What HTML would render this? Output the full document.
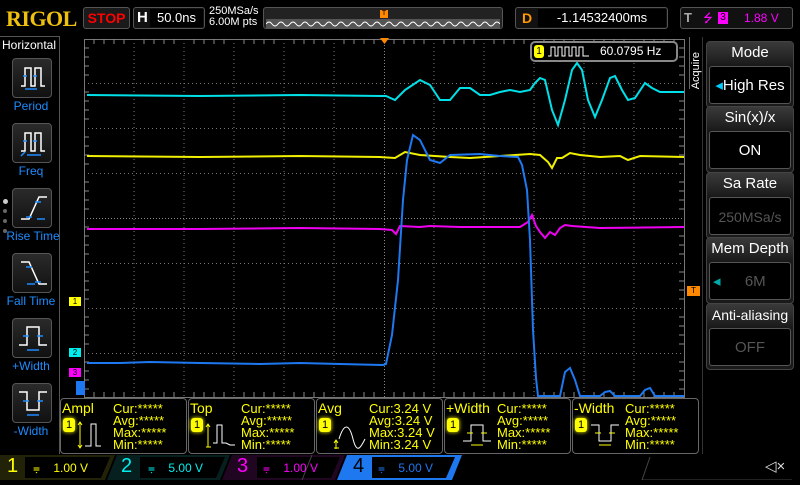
<!DOCTYPE html>
<html><head><meta charset="utf-8"><style>
*{margin:0;padding:0;box-sizing:border-box}
body{width:800px;height:480px;background:#000;position:relative;overflow:hidden;font-family:"Liberation Sans",sans-serif;color:#fff}
.a{position:absolute}
.btn{position:absolute;left:12px;width:40px;height:40px;border:1px solid #555;border-radius:4px;background:linear-gradient(#2a2a2a,#111)}
.bl{position:absolute;left:0;width:62px;text-align:center;color:#1e8cff;font-size:12px}
.rp{position:absolute;left:706px;width:88px;border:1px solid #444;border-radius:4px;background:#1a1a1a}
.rp .t{text-align:center;font-size:15px;color:#fff;height:22px;line-height:22px;background:linear-gradient(#3a3a3a,#1c1c1c)}
.rp .v{margin:2px 2px 3px;height:38px;border:1px solid #555;border-radius:3px;background:#000;text-align:center;line-height:38px;font-size:15px}
.m{position:absolute;top:398px;width:127px;height:56px;border:1px solid #666;border-radius:4px;color:#ff0;font-size:12px;line-height:12px}
.m .n{position:absolute;left:1px;top:3px;font-size:14px}
.m .k{position:absolute;left:52px;top:4px;line-height:12px;font-size:13px}
.m .one{position:absolute;left:2px;top:19px;width:12px;height:14px;background:#ff0;color:#000;border-radius:3px;box-shadow:0 0 4px #ff0;text-align:center;font-size:11px;line-height:14px}
.ch{position:absolute;top:456px;height:24px;font-size:12px}
</style></head><body>
<div class="a" style="left:6px;top:6px;font-family:'Liberation Serif',serif;font-weight:bold;font-size:22px;color:#f0c010;letter-spacing:-0.5px">RIGOL</div>
<div class="a" style="left:83px;top:7px;width:47px;height:22px;border:1px solid #555;border-radius:3px;background:#1a1a1a;color:#f00;font-weight:bold;font-size:14px;text-align:center;line-height:20px">STOP</div>
<div class="a" style="left:133px;top:7px;width:72px;height:22px;border:1px solid #555;border-radius:3px;background:#111"><span class="a" style="left:3px;top:1px;font-weight:bold;font-size:15px">H</span><div class="a" style="left:16px;top:1px;width:53px;height:18px;background:#000;font-size:13px;text-align:center;line-height:18px">50.0ns</div></div>
<div class="a" style="left:209px;top:6px;font-size:11px;line-height:11px">250MSa/s<br>6.00M pts</div>
<div class="a" style="left:263px;top:7px;width:240px;height:22px;border:1px solid #555;border-radius:3px;background:#222">
<svg class="a" style="left:2px;top:11px" width="234" height="9"><rect width="234" height="9" fill="#555"/><path d="M0 5 q3 -4 6 0 t6 0 t6 0 t6 0 t6 0 t6 0 t6 0 t6 0 t6 0 t6 0 t6 0 t6 0 t6 0 t6 0 t6 0 t6 0 t6 0 t6 0 t6 0 t6 0 t6 0 t6 0 t6 0 t6 0 t6 0 t6 0 t6 0 t6 0 t6 0 t6 0 t6 0 t6 0 t6 0 t6 0 t6 0 t6 0 t6 0 t6 0 t6 0" stroke="#fff" fill="none"/></svg>
<div class="a" style="left:116px;top:2px;width:8px;height:8px;background:#f80;color:#000;font-size:7px;text-align:center">T</div></div>
<div class="a" style="left:515px;top:7px;width:153px;height:22px;border:1px solid #555;border-radius:3px;background:#111"><span class="a" style="left:6px;top:2px;font-weight:bold;font-size:14px;color:#f90">D</span><div class="a" style="left:22px;top:1px;width:128px;height:18px;background:#000;font-size:13px;text-align:center;line-height:18px">-1.14532400ms</div></div>
<div class="a" style="left:680px;top:7px;width:113px;height:22px;border:1px solid #555;border-radius:3px;background:#111;font-size:12px;line-height:20px"><span class="a" style="left:3px;font-weight:bold;color:#aaa;font-size:13px">T</span><span class="a" style="left:22px;color:#f0f">⭍</span><span class="a" style="left:37px;top:4px;width:10px;height:12px;background:#f0f;color:#000;font-size:10px;line-height:12px;text-align:center">3</span><span class="a" style="left:63px;color:#f0f">1.88 V</span></div>
<div class="a" style="left:0;top:36px;width:60px;height:418px;border-right:1px solid #555;border-top:1px solid #555"></div>
<div class="a" style="left:2px;top:38px;font-size:12px">Horizontal</div>
<div class="btn" style="top:58px"><svg width="40" height="40"><path d="M8 27h4V9h6v18h4V9h6v18h4" stroke="#fff" fill="none" stroke-width="1.5"/><path d="M10 17h4M20 17h4M12 30h12" stroke="#1e8cff" stroke-width="1.5"/></svg></div>
<div class="bl" style="top:99px">Period</div>
<div class="btn" style="top:123px"><svg width="40" height="40"><path d="M8 27h4V9h6v18h4V9h6v18h4" stroke="#fff" fill="none" stroke-width="1.5"/><path d="M10 17h4M20 17h4M14 31h14M8 32l4-4" stroke="#1e8cff" stroke-width="1.5"/></svg></div>
<div class="bl" style="top:164px">Freq</div>
<div class="btn" style="top:188px"><svg width="40" height="40"><path d="M8 30h8l10-22h8" stroke="#fff" fill="none" stroke-width="1.5"/><path d="M13 28h6M22 13h6M24 30h8" stroke="#1e8cff" stroke-width="1.5"/></svg></div>
<div class="a" style="left:3px;top:199px;width:5px;height:5px;border-radius:3px;background:#ccc"></div>
<div class="a" style="left:3px;top:209px;width:4px;height:4px;border-radius:2px;background:#666"></div>
<div class="a" style="left:3px;top:219px;width:4px;height:4px;border-radius:2px;background:#666"></div>
<div class="a" style="left:3px;top:229px;width:4px;height:4px;border-radius:2px;background:#666"></div>
<div class="bl" style="top:229px;left:2px">Rise Time</div>
<div class="btn" style="top:253px"><svg width="40" height="40"><path d="M8 8h8l10 22h8" stroke="#fff" fill="none" stroke-width="1.5"/><path d="M13 13h6M22 28h6M14 30h8" stroke="#1e8cff" stroke-width="1.5"/></svg></div>
<div class="bl" style="top:294px">Fall Time</div>
<div class="btn" style="top:318px"><svg width="40" height="40"><path d="M6 26h8V8h12v18h8" stroke="#fff" fill="none" stroke-width="1.5"/><path d="M10 17h6M24 17h6M14 31h12" stroke="#1e8cff" stroke-width="1.5"/></svg></div>
<div class="bl" style="top:359px">+Width</div>
<div class="btn" style="top:383px"><svg width="40" height="40"><path d="M6 8h8v18h12V8h8" stroke="#fff" fill="none" stroke-width="1.5"/><path d="M10 17h6M24 17h6M14 31h12" stroke="#1e8cff" stroke-width="1.5"/></svg></div>
<div class="bl" style="top:424px">-Width</div>
<svg class="a" style="left:0;top:0" width="800" height="480">
<g stroke="#777" stroke-width="1" stroke-dasharray="1 3">
<path d="M134 39V397M184 39V397M234 39V397M284 39V397M334 39V397M434 39V397M484 39V397M534 39V397M584 39V397M634 39V397"/>
<path d="M84 83.5H684M84 128.5H684M84 173.5H684M84 263.5H684M84 308.5H684M84 353.5H684"/>
</g>
<path d="M384.5 39V397M84 218.5H684" stroke="#888" stroke-dasharray="1 2"/>
<rect x="84.5" y="39.5" width="600" height="358" fill="none" stroke="#777"/>
<g stroke="#888">
<path d="M84 48h5M84 57h5M84 66h5M84 75h5M84 92h5M84 101h5M84 110h5M84 119h5M84 137h5M84 146h5M84 155h5M84 164h5M84 182h5M84 191h5M84 200h5M84 209h5M84 227h5M84 236h5M84 245h5M84 254h5M84 272h5M84 281h5M84 290h5M84 299h5M84 317h5M84 326h5M84 335h5M84 344h5M84 362h5M84 371h5M84 380h5M84 389h5"/>
<path d="M684 48h-5M684 57h-5M684 66h-5M684 75h-5M684 92h-5M684 101h-5M684 110h-5M684 119h-5M684 137h-5M684 146h-5M684 155h-5M684 164h-5M684 182h-5M684 191h-5M684 200h-5M684 209h-5M684 227h-5M684 236h-5M684 245h-5M684 254h-5M684 272h-5M684 281h-5M684 290h-5M684 299h-5M684 317h-5M684 326h-5M684 335h-5M684 344h-5M684 362h-5M684 371h-5M684 380h-5M684 389h-5"/>
<path d="M94 397v-5M104 397v-5M114 397v-5M124 397v-5M144 397v-5M154 397v-5M164 397v-5M174 397v-5M194 397v-5M204 397v-5M214 397v-5M224 397v-5M244 397v-5M254 397v-5M264 397v-5M274 397v-5M294 397v-5M304 397v-5M314 397v-5M324 397v-5M344 397v-5M354 397v-5M364 397v-5M374 397v-5M394 397v-5M404 397v-5M414 397v-5M424 397v-5M444 397v-5M454 397v-5M464 397v-5M474 397v-5M494 397v-5M504 397v-5M514 397v-5M524 397v-5M544 397v-5M554 397v-5M564 397v-5M574 397v-5M594 397v-5M604 397v-5M614 397v-5M624 397v-5M644 397v-5M654 397v-5M664 397v-5M674 397v-5"/>
<path d="M94 39v5M104 39v5M114 39v5M124 39v5M144 39v5M154 39v5M164 39v5M174 39v5M194 39v5M204 39v5M214 39v5M224 39v5M244 39v5M254 39v5M264 39v5M274 39v5M294 39v5M304 39v5M314 39v5M324 39v5M344 39v5M354 39v5M364 39v5M374 39v5M394 39v5M404 39v5M414 39v5M424 39v5M444 39v5M454 39v5M464 39v5M474 39v5M494 39v5M504 39v5M514 39v5M524 39v5M544 39v5M554 39v5M564 39v5M574 39v5M594 39v5M604 39v5M614 39v5M624 39v5M644 39v5M654 39v5M664 39v5M674 39v5"/>
</g>
<polyline fill="none" stroke="#00e0e8" stroke-width="2" points="87,95 200,96 300,95 380,96 386,96 395,100 405,90 420,80 430,85 440,100 450,100 460,88 470,88 480,95 490,95 500,92 510,90 520,92 530,90 535,83 540,78 545,80 552,110 558,125 565,100 572,70 577,63 582,70 588,100 595,117 602,100 610,78 615,76 622,90 628,100 635,98 645,83 652,88 660,92 684,92"/>
<polyline fill="none" stroke="#f0f000" stroke-width="2" points="87,156 200,157 300,156 380,157 395,158 405,152 420,155 450,157 470,158 500,156 530,154 540,155 548,162 552,168 557,158 562,158 570,153 580,155 600,157 620,156 628,160 640,156 684,157"/>
<polyline fill="none" stroke="#f000f0" stroke-width="2" points="87,229 200,229 300,228 380,229 392,230 396,234 400,226 420,227 430,226 460,227 520,227 528,222 532,215 536,226 540,232 545,238 550,232 555,235 560,228 565,225 572,226 600,228 684,227"/>
<polyline fill="none" stroke="#1e78f0" stroke-width="2" points="87,363 120,363 150,362 200,363 260,364 300,363 340,364 383,365 386,364 392,335 398,280 403,200 407,160 413,135 420,140 430,160 440,163 450,155 480,154 500,156 518,157 522,165 527,190 530,240 533,330 536,378 538,396 560,396 565,372 570,368 575,380 580,396 600,396 605,392 610,391 615,396 640,396 645,390 650,388 655,396 684,396"/>
</svg>
<div class="a" style="left:69px;top:297px;width:12px;height:9px;background:#ff0;color:#000;font-size:8px;line-height:9px;text-align:center">1</div>
<div class="a" style="left:69px;top:348px;width:12px;height:9px;background:#0ee;color:#000;font-size:8px;line-height:9px;text-align:center">2</div>
<div class="a" style="left:69px;top:368px;width:12px;height:9px;background:#f0f;color:#000;font-size:8px;line-height:9px;text-align:center">3</div>
<div class="a" style="left:76px;top:381px;width:9px;height:14px;background:#1e78f0"></div>
<div class="a" style="left:380px;top:38px;width:9px;height:6px;background:#f80;clip-path:polygon(0 0,100% 0,50% 100%)"></div>
<div class="a" style="left:687px;top:286px;width:13px;height:10px;background:#f80;color:#000;font-size:8px;line-height:10px;text-align:center">T</div>
<div class="a" style="left:530px;top:41px;width:148px;height:21px;border:2px solid #888;border-radius:5px;background:#000;font-size:12px;line-height:17px">
<div class="a" style="left:2px;top:2px;width:10px;height:13px;background:#ff0;color:#000;border-radius:3px;font-size:10px;line-height:13px;text-align:center">1</div>
<svg class="a" style="left:16px;top:3px" width="45" height="12"><path d="M0 10h3V1h4v9h3V1h4v9h3V1h4v9h3V1h4v9h3V1h4v9h6" stroke="#fff" fill="none"/></svg>
<span class="a" style="left:68px">60.0795 Hz</span></div>
<div class="a" style="left:689px;top:37px;width:15px;height:52px;border-left:1px solid #666"></div>
<div class="a" style="left:690px;top:52px;font-size:11px;writing-mode:vertical-rl;transform:rotate(180deg)">Acquire</div>
<div class="a" style="left:702px;top:37px;width:1px;height:417px;background:#333"></div>
<div class="rp" style="top:41px"><div class="t">Mode</div><div class="v" style="font-size:15px"><span style="color:#0cf">◂</span>High Res</div></div>
<div class="rp" style="top:106px"><div class="t">Sin(x)/x</div><div class="v">ON</div></div>
<div class="rp" style="top:172px"><div class="t">Sa Rate</div><div class="v" style="color:#555;font-size:14px">250MSa/s</div></div>
<div class="rp" style="top:237px"><div class="t">Mem Depth</div><div class="v" style="color:#555"><span style="color:#0aa;float:left;margin-left:3px">◂</span>6M</div></div>
<div class="rp" style="top:303px"><div class="t" style="font-size:14px">Anti-aliasing</div><div class="v" style="color:#555">OFF</div></div>
<div class="m" style="left:60px"><span class="n">Ampl</span><div class="one">1</div><div class="k">Cur:*****<br>Avg:*****<br>Max:*****<br>Min:*****</div><svg class="a" style="left:16px;top:22px" width="32" height="28"><path d="M3 2v24M1 4l2-3 2 3M1 24l2 3 2-3" stroke="#ff0" fill="none"/><path d="M8 25h6V3h5v22h5" stroke="#fff" fill="none"/></svg></div>
<div class="m" style="left:188px"><span class="n">Top</span><div class="one">1</div><div class="k">Cur:*****<br>Avg:*****<br>Max:*****<br>Min:*****</div><svg class="a" style="left:16px;top:22px" width="36" height="28"><path d="M3 4v22M1 6l2-3 2 3M1 26h5" stroke="#ff0" fill="none"/><path d="M8 22h4V4h5v18h4l4 2h5" stroke="#fff" fill="none"/></svg></div>
<div class="m" style="left:316px"><span class="n">Avg</span><div class="one">1</div><div class="k">Cur:3.24 V<br>Avg:3.24 V<br>Max:3.24 V<br>Min:3.24 V</div><svg class="a" style="left:14px;top:18px" width="36" height="32"><path d="M5 24v8M3 26l2-3 2 3M3 31h5" stroke="#ff0" fill="none"/><path d="M8 22c5-16 10-16 14 0s8 8 12 0" stroke="#fff" fill="none"/></svg></div>
<div class="m" style="left:444px"><span class="n">+Width</span><div class="one">1</div><div class="k">Cur:*****<br>Avg:*****<br>Max:*****<br>Min:*****</div><svg class="a" style="left:16px;top:24px" width="32" height="26"><path d="M2 18h8V2h12v16h8" stroke="#fff" fill="none"/><path d="M6 10h6M20 10h6M10 22h12" stroke="#ff0"/></svg></div>
<div class="m" style="left:572px"><span class="n">-Width</span><div class="one">1</div><div class="k">Cur:*****<br>Avg:*****<br>Max:*****<br>Min:*****</div><svg class="a" style="left:16px;top:24px" width="32" height="26"><path d="M2 2h8v16h12V2h8" stroke="#fff" fill="none"/><path d="M6 10h6M20 10h6M10 22h12" stroke="#ff0"/></svg></div>
<svg class="a" style="left:0;top:455px" width="800" height="25">
<polygon points="0,0 115,0 105,25 0,25" fill="#222208"/><polygon points="25,2 110,2 101,23 25,23" fill="#000"/>
<polygon points="117,0 230,0 220,25 107,25" fill="#062020"/><polygon points="140,2 225,2 216,23 140,23" fill="#000"/>
<polygon points="232,0 345,0 335,25 222,25" fill="#200620"/><polygon points="257,2 340,2 331,23 257,23" fill="#000"/>
<polygon points="347,0 462,0 452,25 337,25" fill="#1e78f0"/><polygon points="372,2 455,2 446,23 372,23" fill="#000"/>
<path d="M312 0l-10 25M650 2l-8 23h150" stroke="#444" fill="none"/>
</svg>
<div class="ch" style="left:7px;color:#ff0;font-size:20px;top:455px">1</div>
<div class="ch" style="left:33px;color:#ff0;top:461px">⩦&nbsp;&nbsp;&nbsp;&nbsp;1.00 V</div>
<div class="ch" style="left:121px;color:#0ee;font-size:20px;top:455px">2</div>
<div class="ch" style="left:148px;color:#0ee;top:461px">⩦&nbsp;&nbsp;&nbsp;&nbsp;5.00 V</div>
<div class="ch" style="left:237px;color:#f0f;font-size:20px;top:455px">3</div>
<div class="ch" style="left:263px;color:#f0f;top:461px">⩦&nbsp;&nbsp;&nbsp;&nbsp;1.00 V</div>
<div class="ch" style="left:353px;color:#000;font-size:20px;top:455px">4</div>
<div class="ch" style="left:378px;color:#1e78f0;top:461px">⩦&nbsp;&nbsp;&nbsp;&nbsp;5.00 V</div>
<div class="a" style="left:765px;top:457px;font-size:15px;color:#ddd">◁×</div>
</body></html>
